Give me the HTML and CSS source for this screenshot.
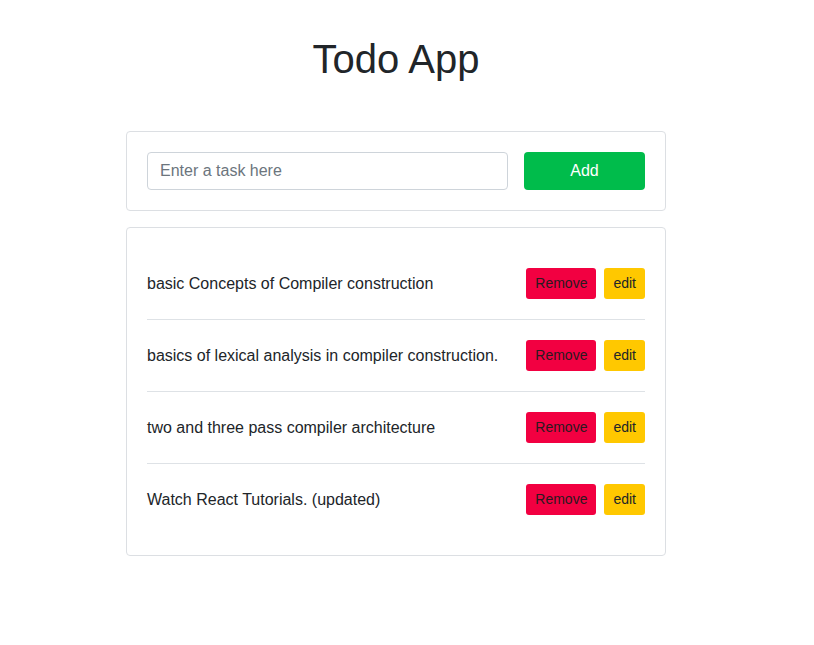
FILE: index.html
```html
<!DOCTYPE html>
<html lang="en">
<head>
<meta charset="utf-8">
<title>Todo App</title>
<link rel="stylesheet" href="styles.css">
</head>
<body>
<div class="page">
  <h1 class="title">Todo App</h1>
  <div class="card add-card">
    <input class="task-input" type="text" placeholder="Enter a task here">
    <button class="btn btn-add">Add</button>
  </div>
  <div class="card list-card">
    <div class="item">
      <span class="item-text">basic Concepts of Compiler construction</span>
      <div class="actions"><button class="btn btn-remove">Remove</button><button class="btn btn-edit">edit</button></div>
    </div>
    <div class="item">
      <span class="item-text">basics of lexical analysis in compiler construction.</span>
      <div class="actions"><button class="btn btn-remove">Remove</button><button class="btn btn-edit">edit</button></div>
    </div>
    <div class="item">
      <span class="item-text">two and three pass compiler architecture</span>
      <div class="actions"><button class="btn btn-remove">Remove</button><button class="btn btn-edit">edit</button></div>
    </div>
    <div class="item">
      <span class="item-text">Watch React Tutorials. (updated)</span>
      <div class="actions"><button class="btn btn-remove">Remove</button><button class="btn btn-edit">edit</button></div>
    </div>
  </div>
</div>
</body>
</html>
```
FILE: styles.css
```css
* { box-sizing: border-box; }
html, body { margin: 0; padding: 0; background: #fff; }
body {
  font-family: "Liberation Sans", Arial, sans-serif;
  color: #212529;
  font-size: 16px;
}
.page {
  width: 792px;
  padding-top: 35px;
  display: flex;
  flex-direction: column;
  align-items: center;
}
.title {
  margin: 0 0 48px;
  font-size: 40px;
  font-weight: 400;
  line-height: 48px;
}
.card {
  width: 540px;
  border: 1px solid #dcdfe3;
  border-radius: 4px;
  padding: 20px;
  background: #fff;
}
.add-card {
  display: flex;
  gap: 16px;
  margin-bottom: 16px;
}
.task-input {
  flex: 1;
  height: 38px;
  border: 1px solid #ced4da;
  border-radius: 4px;
  padding: 6px 12px;
  font: inherit;
  font-size: 16px;
  color: #495057;
}
.task-input::placeholder { color: #6c757d; }
.btn {
  border: none;
  font-family: inherit;
  cursor: pointer;
}
.btn-add {
  width: 121px;
  height: 38px;
  background: #00bc4b;
  color: #fff;
  font-size: 16px;
  border-radius: 4px;
}
.list-card { padding: 20px; }
.item {
  display: flex;
  align-items: center;
  justify-content: space-between;
  padding: 20px 0;
  border-bottom: 1px solid #dee2e6;
}
.item:last-child { border-bottom: none; }
.item-text { line-height: 24px; }
.actions { display: flex; gap: 8px; }
.btn-remove, .btn-edit {
  font-size: 14px;
  height: 31px;
  line-height: 31px;
  padding: 0 9px;
  border-radius: 3px;
  color: #2a1a20;
}
.btn-remove { background: #f20041; }
.btn-edit { background: #ffc800; color: #212529; }
```
